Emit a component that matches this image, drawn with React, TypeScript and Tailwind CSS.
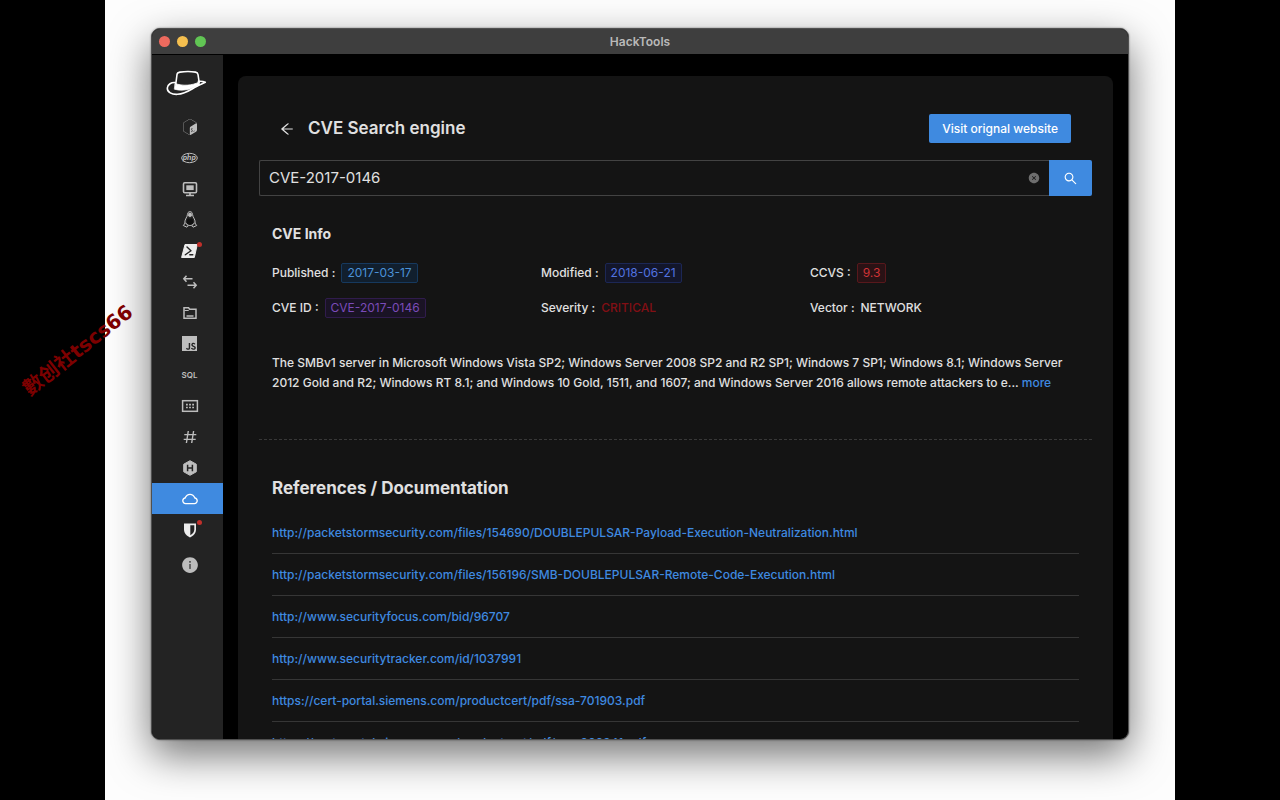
import React from "react";
import { SiGnubash, SiJavascript } from "react-icons/si";
import {
  AiOutlineArrowLeft,
  AiOutlineCloud,
  AiOutlineSearch,
  AiFillCloseCircle,
  AiFillInfoCircle,
} from "react-icons/ai";

type Item = { label: string; icon: React.ReactNode; dot?: boolean; active?: boolean };

const HatLogo = () => (
  <svg viewBox="0 0 42 28" className="h-7 w-[42px]" fill="none" stroke="#fff" strokeLinecap="round" strokeLinejoin="round">
    <path
      d="M9.300 13.500C5.500 13 1.500 15.500 1.300 19c-.2 4.300 4.500 6.600 10.200 6.300 8-.5 13.500-5 19-7.800 3.500-1.800 6.500-3.300 8.800-4.300-2-1-4.500-1-7-.9"
      strokeWidth="1.6"
    />
    <path d="M9.8 15 11 5.500c.2-1.600 1.200-2.100 3-2.400 5-.8 11-.8 15.500 0 1.600.3 2.300 1 2.500 2.400l1.200 8" strokeWidth="1.6" />
    <path
      d="M9.300 14.500c7 2.800 17 2.200 23.700-1.500l.5 3c-2 .5-5.300 2.300-8.300 3.500-5 1.800-11.500 2.300-16.500.8z"
      fill="#fff"
      strokeWidth=".8"
    />
  </svg>
);

const PhpIcon = () => (
  <svg viewBox="0 0 17 12" className="h-3 w-[17px]">
    <ellipse cx="8.5" cy="6" rx="7.800" ry="4.700" fill="none" stroke="currentColor" strokeWidth="1" />
    <text x="8.3" y="8" textAnchor="middle" fontSize="7" fontWeight="700" fontStyle="italic" fontFamily="Inter, sans-serif" fill="currentColor">
      php
    </text>
  </svg>
);

const MonitorIcon = () => (
  <svg viewBox="0 0 16 16" className="size-4" fill="none" stroke="currentColor">
    <rect x="1.5" y="1.7" width="13" height="10" rx="1.2" strokeWidth="1.6" />
    <rect x="4.3" y="4.3" width="7.4" height="4.8" fill="currentColor" stroke="none" />
    <path d="M8 12v2.300M4 14.500h8" strokeWidth="1.7" />
  </svg>
);

const LinuxIcon = () => (
  <svg viewBox="0 0 16 17" className="h-[17px] w-4">
    <path
      d="M8 .7c1.800 0 2.600 1.300 2.600 3 0 2.300 2.600 4.300 2.600 7.800 0 1-.3 1.700-.8 2.200l-1.900.1C9.500 14.600 6.500 14.600 5.500 13.800L3.600 13.700c-.5-.5-.8-1.200-.8-2.200 0-3.500 2.600-5.500 2.600-7.800C5.400 2 6.200.7 8 .7z"
      fill="#232323"
      stroke="currentColor"
      strokeWidth="1"
    />
    <path d="M6.200 2.600c.8-1 2.800-1 3.600 0l.1 2.500L8 6.300 6.100 5.100z" fill="currentColor" />
    <path d="M6 7.200C5 9 4.600 10.500 5 12.500L8 14l3-1.500c.4-2 0-3.500-1-5.300L8 8z" fill="#101010" />
    <path d="M1.300 14.500l2.200-2.800 2.700 3.200-1.200 1.300zM14.700 14.500l-2.200-2.800-2.700 3.200 1.200 1.300z" fill="#232323" stroke="currentColor" strokeWidth="1" strokeLinejoin="round" />
  </svg>
);

const PowerShellIcon = () => (
  <svg viewBox="0 0 17 14" className="h-[14px] w-[17px]">
    <path d="M4 .5h12.300L13.300 13.500H.6z" fill="#ececec" stroke="#ececec" strokeLinejoin="round" />
    <path d="M6 3l4 3.800-5.700 4M8.800 10.800h3" fill="none" stroke="#232323" strokeWidth="1.4" strokeLinecap="round" strokeLinejoin="round" />
  </svg>
);

const TransferIcon = () => (
  <svg viewBox="0 0 16 16" className="size-4" fill="none" stroke="currentColor" strokeWidth="1.5">
    <path d="M4.500 1.800 1.800 4.800l2.700 3M2 4.800h8.500M11.500 8.300l2.700 3-2.700 3M14 11.300H5.500" />
  </svg>
);

const FolderIcon = () => (
  <svg viewBox="0 0 16 16" className="size-4" fill="none" stroke="currentColor" strokeWidth="1.5">
    <path d="M2 13.300V2.700h4.500l1.300 1.600H14v9z" />
    <path d="M2.500 5.500h3.800l1.200 -1" strokeWidth="1" />
    <path d="M4.500 11h7" strokeWidth="1.5" />
  </svg>
);

const KeyboardIcon = () => (
  <svg viewBox="0 0 18 14" className="h-[14px] w-[18px]" fill="none" stroke="currentColor">
    <rect x="1.6" y="1.7" width="14.8" height="10.6" strokeWidth="1.5" />
    <path d="M5 5.700h1.800M8.100 5.700h1.800M11.200 5.700H13M5 8.500h1.800M8.100 8.500h1.800M11.200 8.500H13" strokeWidth="1.7" />
  </svg>
);

const HashIcon = () => (
  <svg viewBox="0 0 16 16" className="size-4" fill="none" stroke="currentColor" strokeWidth="1.4">
    <path d="M6.300 2 4.400 14M11.600 2 9.700 14M2.300 5.600h12M1.700 10.400h12" />
  </svg>
);

const HexIcon = () => (
  <svg viewBox="0 0 16 16" className="size-4">
    <path d="M8 .7 14.300 4.200v7.600L8 15.300 1.700 11.800V4.200z" fill="currentColor" stroke="currentColor" strokeLinejoin="round" />
    <path d="M5.600 4.800v6.400M10.400 4.800v6.400M5.600 8h4.800" fill="none" stroke="#232323" strokeWidth="1.5" />
  </svg>
);

const ShieldIcon = () => (
  <svg viewBox="0 0 16 16" className="size-4">
    <path d="M2 1.500h12v6c0 3.800-2.500 6.200-6 8-3.500-1.800-6-4.200-6-8z" fill="#ececec" />
    <path d="M8.300 3.200h4v4.300c0 2.600-1.500 4.300-4 5.800z" fill="#232323" />
  </svg>
);

const items: Item[] = [
  { label: "Reverse shell", icon: <SiGnubash className="size-4" /> },
  { label: "PHP", icon: <PhpIcon /> },
  { label: "System", icon: <MonitorIcon /> },
  { label: "Linux", icon: <LinuxIcon /> },
  { label: "PowerShell", icon: <PowerShellIcon />, dot: true },
  { label: "Transfer", icon: <TransferIcon /> },
  { label: "Files", icon: <FolderIcon /> },
  { label: "JavaScript", icon: <SiJavascript className="size-[15px]" /> },
  { label: "SQL", icon: <span className="text-[8px] font-semibold">SQL</span> },
  { label: "Encoding", icon: <KeyboardIcon /> },
  { label: "Hash", icon: <HashIcon /> },
  { label: "Headers", icon: <HexIcon /> },
  { label: "CVE", icon: <AiOutlineCloud className="size-[18px] text-white" />, active: true },
  { label: "Security", icon: <ShieldIcon />, dot: true },
];

const links = [
  "http://packetstormsecurity.com/files/154690/DOUBLEPULSAR-Payload-Execution-Neutralization.html",
  "http://packetstormsecurity.com/files/156196/SMB-DOUBLEPULSAR-Remote-Code-Execution.html",
  "http://www.securityfocus.com/bid/96707",
  "http://www.securitytracker.com/id/1037991",
  "https://cert-portal.siemens.com/productcert/pdf/ssa-701903.pdf",
  "https://cert-portal.siemens.com/productcert/pdf/ssa-966341.pdf",
];

function Sidebar() {
  return (
    <nav aria-label="Tools" className="w-[71px] shrink-0 bg-[#232323] pt-[14px] text-[#bdbdbd]">
      <div className="mb-[14px] pl-[14px]">
        <HatLogo />
      </div>
      {items.map((it) => (
        <button
          key={it.label}
          type="button"
          aria-label={it.label}
          className={`flex h-[31px] w-full items-center justify-center pl-1 ${it.active ? "bg-[#3f8ae0]" : ""}`}
        >
          <span className="relative flex items-center">
            {it.icon}
            {it.dot && <span className="absolute -top-0.5 -right-1 size-[5px] rounded-full bg-[#c0302b]" />}
          </span>
        </button>
      ))}
      <button type="button" aria-label="About" className="mt-1 flex h-[31px] w-full items-center justify-center pl-1">
        <AiFillInfoCircle className="size-[18px]" />
      </button>
    </nav>
  );
}

function Field({ label, children }: { label: string; children: React.ReactNode }) {
  return (
    <div className="flex h-[35px] items-center gap-1.5">
      <dt>{label} :</dt>
      <dd className="flex">{children}</dd>
    </div>
  );
}

const tag = "rounded-xs border px-[5px] text-[12px] leading-[18px] font-normal";

export default function App() {
  return (
    <div className="relative flex h-screen bg-black px-[105px] font-[Inter,'Noto_Sans_CJK_SC',sans-serif] text-[12px] font-medium text-[#e0e0e0]">
      <div className="flex min-w-0 flex-1 flex-col overflow-hidden bg-[#fdfdfd] px-[46px] pt-7 pb-[60px]">
        <div className="flex min-h-0 flex-1 flex-col overflow-hidden rounded-[9px] border border-[#505050] bg-black shadow-[0_15px_40px_rgba(0,0,0,0.55),0_0_2px_rgba(0,0,0,0.5)]">
          <header className="flex h-[26px] shrink-0 items-center border-b border-black bg-[#3e3e3e] px-[7px]">
            <div className="flex flex-1 gap-[7px]">
              <span className="size-[11px] rounded-full bg-[#ed6a5e]" />
              <span className="size-[11px] rounded-full bg-[#f5bf4f]" />
              <span className="size-[11px] rounded-full bg-[#61c554]" />
            </div>
            <h1 className="text-[12px] font-semibold text-[#b9b9b9]">HackTools</h1>
            <div className="flex-1" />
          </header>

          <div className="flex min-h-0 flex-1">
            <Sidebar />
            <main className="min-w-0 flex-1 overflow-hidden px-[15px] pt-[21px]">
              <section className="rounded-lg bg-[#141414] px-[21px] pt-[38px]">
                <div className="flex items-center pr-[21px] pl-5">
                  <button type="button" aria-label="Back">
                    <AiOutlineArrowLeft className="size-4" />
                  </button>
                  <h2 className="ml-[13px] flex-1 text-[17px] font-semibold">CVE Search engine</h2>
                  <button type="button" className="h-[29px] rounded-xs bg-[#3f8ae0] px-[13px] text-white">
                    Visit orignal website
                  </button>
                </div>

                <form className="mt-[17px] flex h-9" onSubmit={(e) => e.preventDefault()}>
                  <div className="flex flex-1 items-center rounded-l-xs border border-r-0 border-[#434343] px-[9px]">
                    <input
                      aria-label="CVE identifier"
                      defaultValue="CVE-2017-0146"
                      className="min-w-0 flex-1 bg-transparent text-[15px] font-normal outline-none"
                    />
                    <button type="button" aria-label="Clear">
                      <AiFillCloseCircle className="size-3 text-[#6e6e6e]" />
                    </button>
                  </div>
                  <button type="submit" aria-label="Search" className="flex w-[43px] items-center justify-center rounded-r-xs bg-[#3f8ae0] text-white">
                    <AiOutlineSearch className="size-[15px]" />
                  </button>
                </form>

                <div className="px-[13px]">
                  <h3 className="mt-7 text-[14px] leading-5 font-bold">CVE Info</h3>
                  <dl className="mt-[11px] grid grid-cols-3">
                    <Field label="Published">
                      <span className={`${tag} border-[#16395e] bg-[#111f2e] text-[#4b92d8]`}>2017-03-17</span>
                    </Field>
                    <Field label="Modified">
                      <span className={`${tag} border-[#1c2755] bg-[#13162b] text-[#5273e0]`}>2018-06-21</span>
                    </Field>
                    <Field label="CCVS">
                      <span className={`${tag} border-[#58181c] bg-[#2a1215] text-[#cf3336]`}>9.3</span>
                    </Field>
                    <Field label="CVE ID">
                      <span className={`${tag} border-[#301c4d] bg-[#1a1325] text-[#7a4bb8]`}>CVE-2017-0146</span>
                    </Field>
                    <Field label="Severity">
                      <span className="text-[#820f14]">CRITICAL</span>
                    </Field>
                    <Field label="Vector">NETWORK</Field>
                  </dl>
                  <p className="mt-7 leading-5">
                    The SMBv1 server in Microsoft Windows Vista SP2; Windows Server 2008 SP2 and R2 SP1; Windows 7 SP1; Windows 8.1; Windows Server 2012 Gold and R2; Windows RT 8.1; and Windows 10 Gold, 1511, and 1607; and Windows Server 2016 allows remote attackers to e...{" "}
                    <a href="#more" className="text-[#3f8ae0]">more</a>
                  </p>
                </div>

                <hr className="mt-[46px] border-t border-dashed border-[#383838]" />

                <div className="px-[13px] pt-[34px]">
                  <h2 className="text-[17px] leading-7 font-bold">References / Documentation</h2>
                  <ul className="mt-2.5">
                    {links.map((l) => (
                      <li key={l} className="flex h-[42px] items-center border-b border-[#363636]">
                        <a href={l} className="text-[#3f8ae0]">{l}</a>
                      </li>
                    ))}
                  </ul>
                </div>
              </section>
            </main>
          </div>
        </div>
      </div>
      <div className="absolute top-[336px] left-[11px] -rotate-[38deg] font-['DejaVu_Sans','Noto_Sans_CJK_SC',sans-serif] text-[20px] leading-7 font-bold whitespace-nowrap text-[#7d0000]">
        數创社tscs66
      </div>
    </div>
  );
}
